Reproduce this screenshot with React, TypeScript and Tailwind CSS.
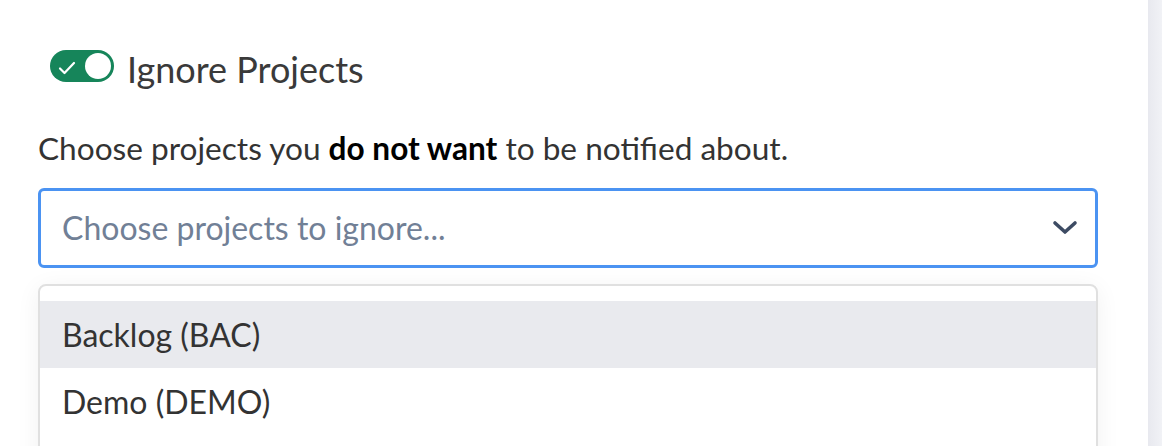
import React from "react";

export default function App() {
  return (
    <div className="w-[1162px] h-[446px] overflow-hidden flex bg-white" style={{ fontFamily: "Lato, 'Noto Sans', sans-serif" }}>
      <div className="flex-1 pl-[38px] pr-[50px] pt-[46px]">
        <div className="flex items-center gap-[13px] pl-[12px] h-[40px]">
          <div className="relative w-[64px] h-[32px] rounded-full bg-[#16855a] shrink-0">
            <svg className="absolute left-[8px] top-[11px]" width="18" height="14" viewBox="0 0 18 14" fill="none">
              <path d="M2 7.5 L6.5 12 L16 2" stroke="white" strokeWidth="2.2" strokeLinecap="round" strokeLinejoin="round" />
            </svg>
            <div className="absolute right-[3px] top-[3px] w-[26px] h-[26px] rounded-full bg-white" />
          </div>
          <span className="relative top-[3px] text-[36px] leading-[40px] text-[#3a3a3a]">Ignore Projects</span>
        </div>
        <p className="mt-[42px] text-[31.6px] leading-[40px] text-[#333333]">
          Choose projects you <b className="font-bold text-black">do not want</b> to be notified about.
        </p>
        <div className="mt-[20px] h-[80px] rounded-[6px] border-[3px] border-[#4b93f2] flex items-center pl-[21px] pr-[17px]">
          <span className="flex-1 text-[32px] leading-[40px] text-[#718096]">Choose projects to ignore...</span>
          <svg width="26" height="16" viewBox="0 0 26 16" fill="none">
            <path d="M3 3 L13 12 L23 3" stroke="#3d4b63" strokeWidth="3.6" strokeLinecap="round" strokeLinejoin="round" />
          </svg>
        </div>
        <div className="mt-[16px] rounded-[8px] border-2 border-[#e0e0e0] shadow-[0_4px_24px_rgba(0,0,0,0.06)] pt-[15px] pb-[60px] overflow-hidden">
          <div className="h-[67px] bg-[#e9eaee] flex items-center pl-[22px] text-[32px] text-[#333333]">Backlog (BAC)</div>
          <div className="h-[67px] flex items-center pl-[22px] text-[32px] text-[#333333]">Demo (DEMO)</div>
        </div>
      </div>
      <div className="w-[14px] h-full bg-gradient-to-r from-[#e8e9ef] to-[#f1f2f6]" />
    </div>
  );
}
